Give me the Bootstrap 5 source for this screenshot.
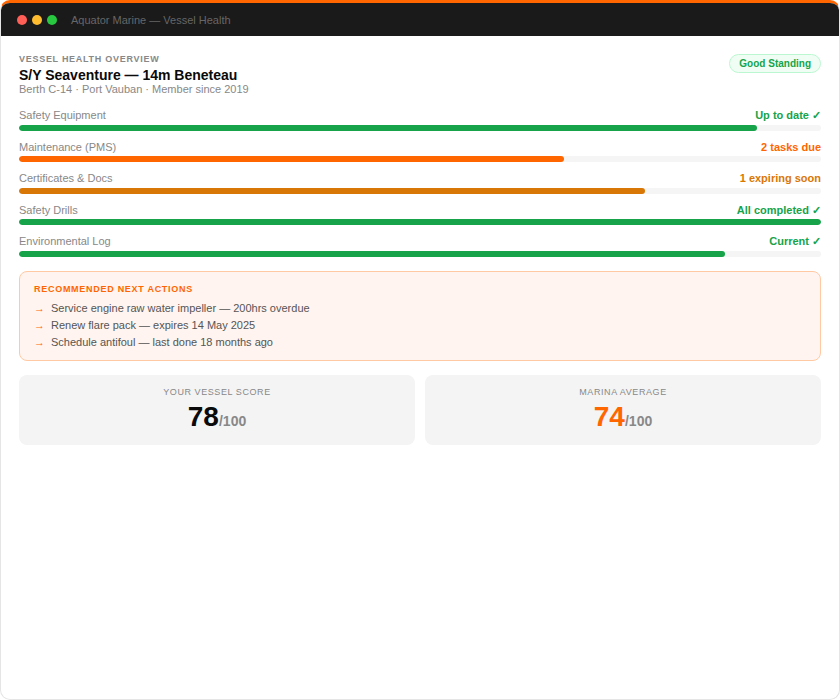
<!DOCTYPE html>
<html lang="en">
<head>
  <meta charset="UTF-8" />
  <meta name="viewport" content="width=device-width, initial-scale=1.0"/>
  <title>Vessel Health</title>
  <link href="https://cdn.jsdelivr.net/npm/bootstrap@5.3.3/dist/css/bootstrap.min.css" rel="stylesheet"/>
  <style>
    html, body { height: 100%; }
    body { font-family: "Liberation Sans", Arial, sans-serif; background: #fff; }
    .app-window { height: 700px; border: 1px solid #e5e5e5; border-top: 3px solid #ff6600; border-radius: 10px; overflow: hidden; background: #fff; }
    .title-bar { height: 33px; background: #1a1a1a; padding: 1px 16px 0; gap: 5px; }
    .dot { width: 10px; height: 10px; border-radius: 50%; }
    .title-text { font-size: 11px; color: #666; margin-left: 9px; }
    .content-area { padding: 18px 18px 0; }
    .eyebrow { font-size: 9px; font-weight: 700; letter-spacing: .72px; color: #888; line-height: 11px; }
    .vessel-name { font-size: 14px; font-weight: 700; color: #0a0a0a; line-height: 16px; margin: 2px 0 0; }
    .vessel-sub { font-size: 11px; color: #888; line-height: 13px; margin-bottom: 1px; }
    .standing-pill { font-size: 10px; font-weight: 700; color: #16a34a; background: #f0fdf4; border: 1px solid #bbf7d0; border-radius: 20px; padding: 2px 9px; line-height: 13px; }
    .metric-row { margin-bottom: 10px; }
    .metric-label { font-size: 11px; color: #888; line-height: 12.5px; }
    .metric-value { font-size: 11px; font-weight: 700; line-height: 12.5px; }
    .metric-track { height: 6px; border-radius: 3px; background: #f5f5f5; margin-top: 3px; }
    .metric-fill { border-radius: 3px; }
    .c-green { color: #16a34a; } .c-orange { color: #ff6600; } .c-amber { color: #d97706; }
    .bg-green { background: #16a34a; } .bg-orange { background: #ff6600; } .bg-amber { background: #d97706; }
    .actions-box { background: #fff4ef; border: 1px solid #ffc9a3; border-radius: 8px; padding: 12px 14px 9px; margin-top: 14.5px; }
    .actions-title { font-size: 9px; font-weight: 700; letter-spacing: .72px; color: #ff6600; line-height: 11px; margin-bottom: 5px; }
    .action-item { font-size: 11px; color: #555; line-height: 17px; gap: 7px; }
    .action-arrow { color: #ff6600; width: 10px; }
    .score-grid { gap: 10px; margin-top: 14px; }
    .score-box { background: #f4f4f4; border-radius: 8px; padding: 12px 0 8px; text-align: center; }
    .score-label { font-size: 9px; letter-spacing: .58px; color: #888; line-height: 11px; margin-bottom: 3px; }
    .score-number { font-size: 28px; font-weight: 700; color: #0a0a0a; line-height: 32px; }
    .score-number.c-orange { color: #ff6600; }
    .score-number small { font-size: 14px; color: #888; }
  </style>
</head>
<body>
  <div class="app-window">
    <div class="title-bar d-flex align-items-center">
      <span class="dot" style="background:#ff5f57"></span>
      <span class="dot" style="background:#febc2e"></span>
      <span class="dot" style="background:#28c840"></span>
      <span class="title-text">Aquator Marine — Vessel Health</span>
    </div>

    <div class="content-area">
      <!-- Header -->
      <div class="d-flex justify-content-between align-items-start mb-2">
        <div>
          <div class="eyebrow">VESSEL HEALTH OVERVIEW</div>
          <h1 class="vessel-name">S/Y Seaventure — 14m Beneteau</h1>
          <div class="vessel-sub">Berth C-14 · Port Vauban · Member since 2019</div>
        </div>
        <span class="standing-pill">Good Standing</span>
      </div>

      <!-- Metrics -->
      <div id="metric-list" class="pt-1"></div>

      <!-- Actions -->
      <div class="actions-box">
        <div class="actions-title">RECOMMENDED NEXT ACTIONS</div>
        <div class="action-item d-flex"><span class="action-arrow">→</span><span>Service engine raw water impeller — 200hrs overdue</span></div>
        <div class="action-item d-flex"><span class="action-arrow">→</span><span>Renew flare pack — expires 14 May 2025</span></div>
        <div class="action-item d-flex"><span class="action-arrow">→</span><span>Schedule antifoul — last done 18 months ago</span></div>
      </div>

      <!-- Scores -->
      <div class="score-grid d-flex">
        <div class="score-box flex-fill w-50">
          <div class="score-label">YOUR VESSEL SCORE</div>
          <div class="score-number">78<small>/100</small></div>
        </div>
        <div class="score-box flex-fill w-50">
          <div class="score-label">MARINA AVERAGE</div>
          <div class="score-number c-orange">74<small>/100</small></div>
        </div>
      </div>
    </div>
  </div>

  <script src="https://cdn.jsdelivr.net/npm/bootstrap@5.3.3/dist/js/bootstrap.bundle.min.js"></script>
  <script>
    const metrics = [
      { name: "Safety Equipment", status: "Up to date ✓", pct: 92, tone: "green" },
      { name: "Maintenance (PMS)", status: "2 tasks due", pct: 68, tone: "orange" },
      { name: "Certificates & Docs", status: "1 expiring soon", pct: 78, tone: "amber" },
      { name: "Safety Drills", status: "All completed ✓", pct: 100, tone: "green" },
      { name: "Environmental Log", status: "Current ✓", pct: 88, tone: "green" }
    ];

    document.getElementById("metric-list").innerHTML = metrics.map(m => `
      <div class="metric-row">
        <div class="d-flex justify-content-between">
          <span class="metric-label">${m.name.replace("&", "&amp;")}</span>
          <span class="metric-value c-${m.tone}">${m.status}</span>
        </div>
        <div class="progress metric-track">
          <div class="progress-bar metric-fill bg-${m.tone}" style="width:${m.pct}%"></div>
        </div>
      </div>`).join("");
  </script>
</body>
</html>
